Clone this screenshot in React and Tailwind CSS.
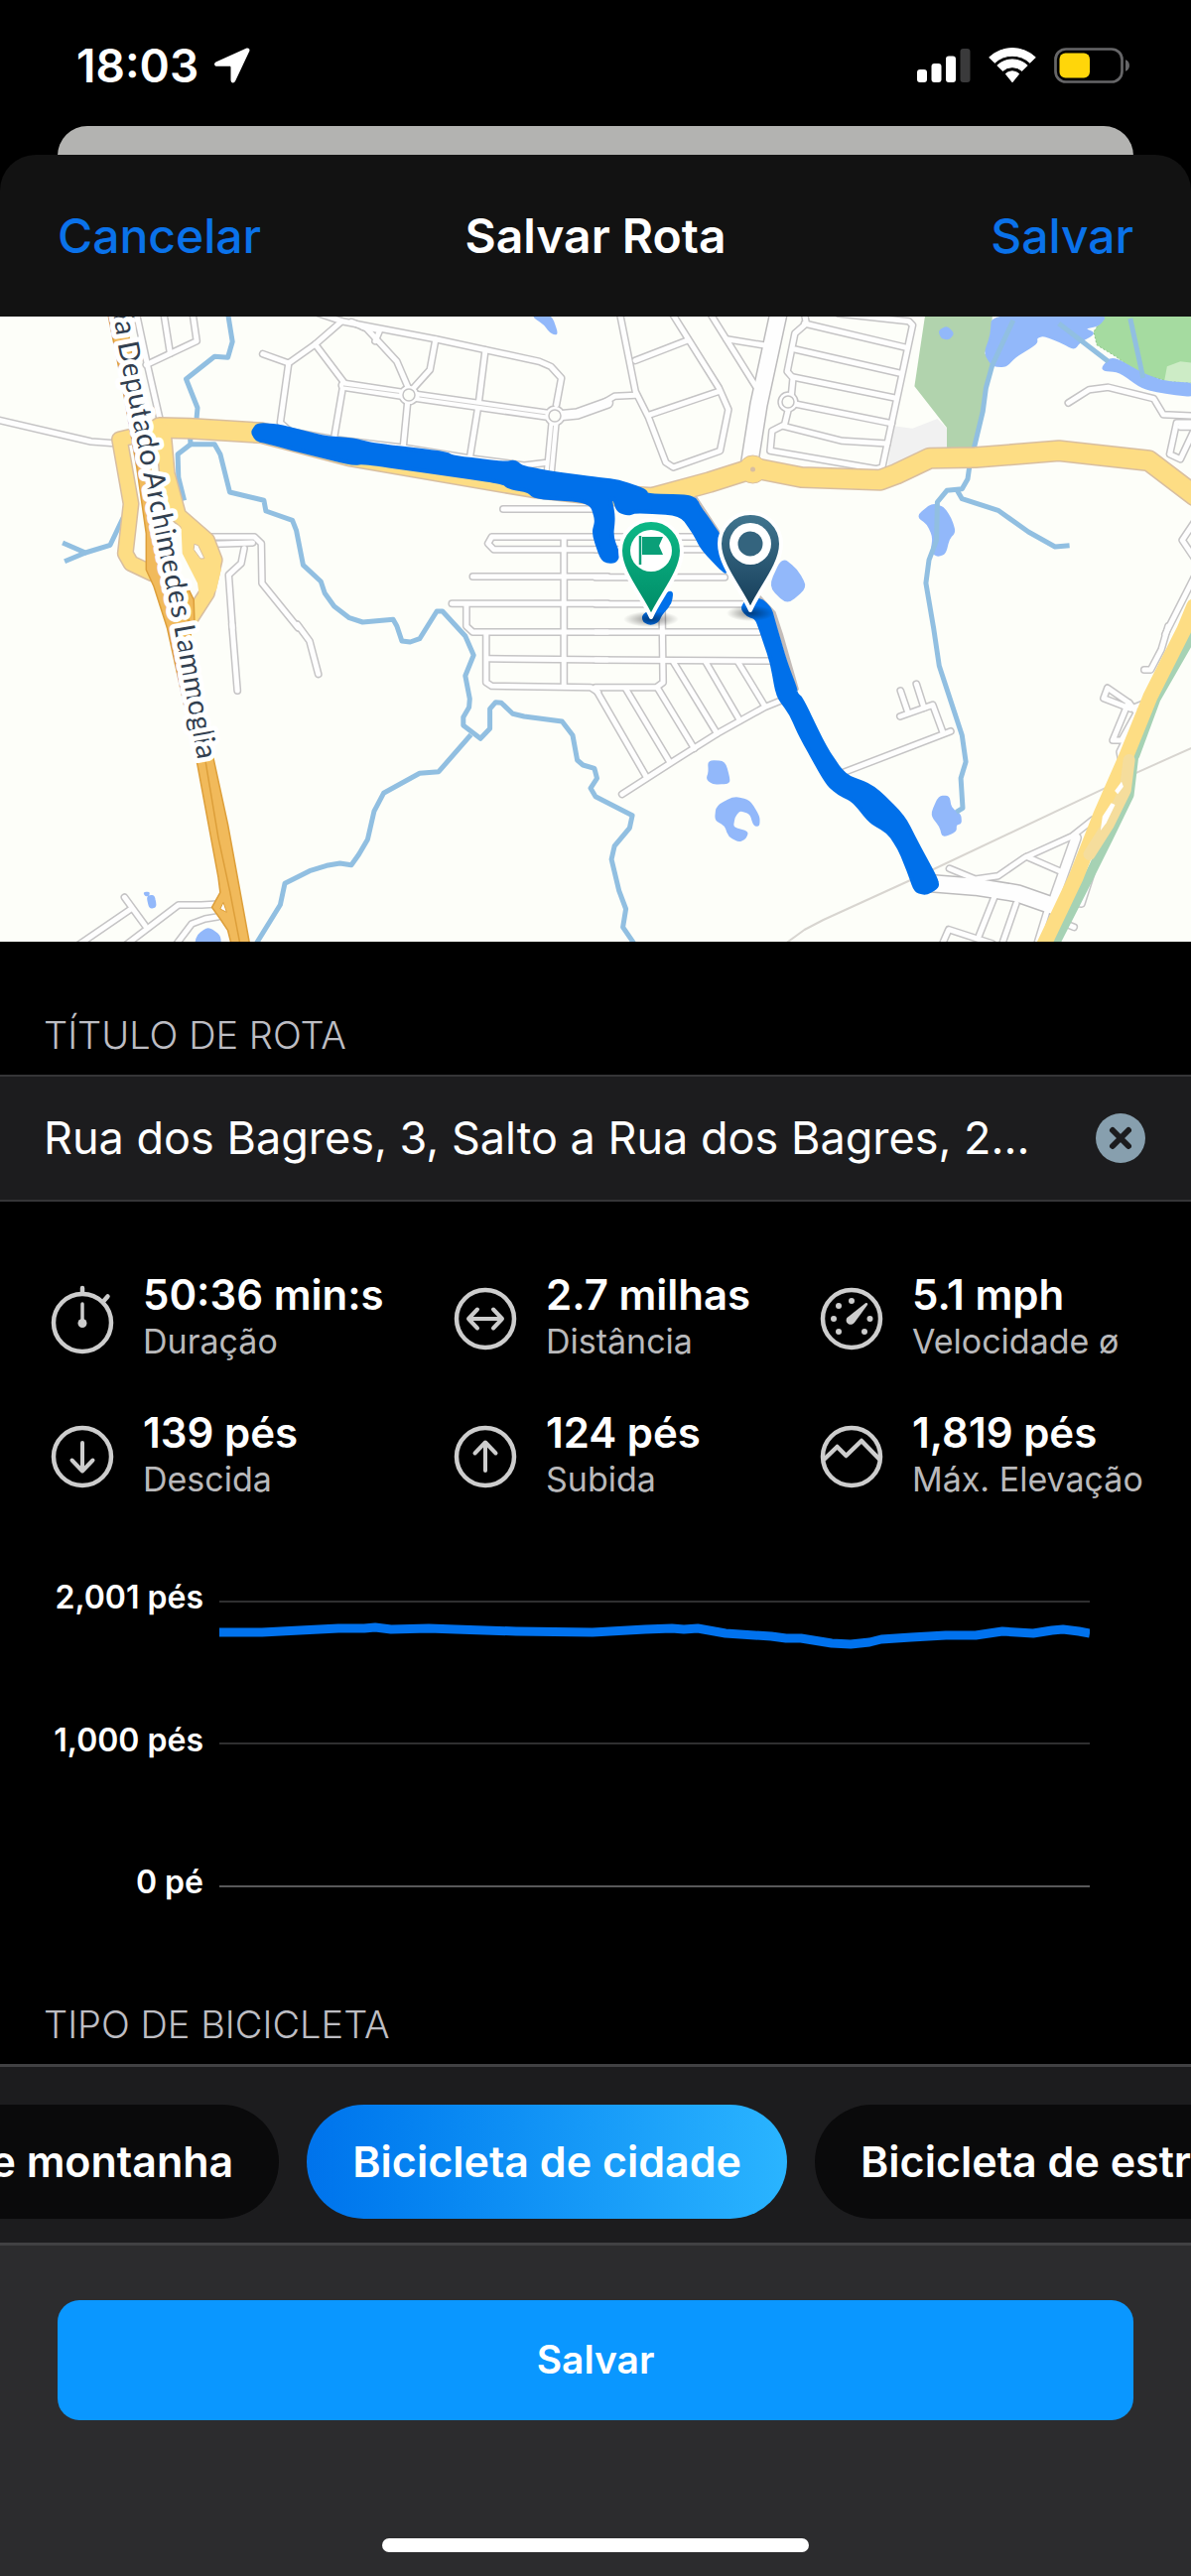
import { useId, useState } from "react";

/* ---------- status bar ---------- */

function StatusBar() {
  return (
    <div className="flex h-[127px] items-center justify-between pl-[77px] pr-[61px] pt-1">
      <div className="flex items-center gap-4">
        <time className="text-[46px] leading-none font-semibold">18:03</time>
        <svg className="h-9 w-9" viewBox="0 0 36 36" fill="#fff" aria-hidden="true">
          <path d="M32.5.6 2 14.2c-3.2 1.5-2.2 4.600.8 4.600H15.400c.8 0 1.100.4 1.100 1.100v12.700c0 3.300 3.300 4 4.700 1L35.300 3.400C36.100 1.500 34.500-.2 32.500.6Z" />
        </svg>
      </div>
      <div className="flex items-center gap-[18px]">
        <svg className="h-[34px] w-[54px]" viewBox="0 0 54 34" fill="#fff" aria-label="Sinal">
          <rect x="0" y="21" width="10" height="13" rx="3" />
          <rect x="14.500" y="15" width="10" height="19" rx="3" />
          <rect x="29" y="7.500" width="10" height="26.500" rx="3" />
          <rect x="43.500" y="0" width="10" height="34" rx="3" fill="#3a3a3b" />
        </svg>
        <svg className="h-9 w-12" viewBox="0 0 48 36" fill="#fff" stroke="#fff" strokeWidth="1" strokeLinejoin="round" aria-label="Wi-Fi">
          <path d="M.7 9.800A34 34 0 0 1 47.300 9.800L41.800 15.300A26 26 0 0 0 6.200 15.300Z" />
          <path d="M8.800 18A22 22 0 0 1 39.200 18L33.700 23.400A14.500 14.500 0 0 0 14.300 23.400Z" />
          <path d="M17.300 26.400A10 10 0 0 1 30.700 26.400L24 34.800Z" />
        </svg>
        <svg className="h-9 w-[77px]" viewBox="0 0 77 36" fill="none" aria-label="Bateria">
          <rect x="1.500" y="1.500" width="67" height="33" rx="10.500" stroke="#666668" strokeWidth="2.700" />
          <rect x="5.500" y="5.500" width="30.500" height="25" rx="6" fill="#ffd60a" />
          <path d="M72 12.200c5.300 1.500 5.300 10.200 0 11.600Z" fill="#666668" />
        </svg>
      </div>
    </div>
  );
}

/* ---------- map ---------- */

/* Map data is surveyed in four sheets; each one is projected onto the 1200 x 630 canvas. */
const SHEETS = { nw: [0, -8], ne: [600, -8], sw: [0, 312], se: [600, 312] };

function points(sheet, line) {
  const [ox, oy] = SHEETS[sheet];
  return line.split(" ").map((pair) => {
    const [x, y] = pair.split(",").map(Number);
    return [ox + x / 2.6133, oy + y / 3];
  });
}

function project(sheet, line) {
  return points(sheet, line)
    .map(([x, y]) => `${x.toFixed(1)},${y.toFixed(1)}`)
    .join(" ");
}

/* Closed outline with rounded corners: each corner becomes a short curve. */
function softOutline(sheet, line) {
  const pts = points(sheet, line);
  const at = (a, b, t) => `${(a[0] + (b[0] - a[0]) * t).toFixed(1)} ${(a[1] + (b[1] - a[1]) * t).toFixed(1)}`;
  const parts = pts.map((p, i) => {
    const prev = pts[(i + pts.length - 1) % pts.length];
    const next = pts[(i + 1) % pts.length];
    return `${i ? "L" : "M"}${at(p, prev, 0.35)}Q${p[0].toFixed(1)} ${p[1].toFixed(1)} ${at(p, next, 0.35)}`;
  });
  return `${parts.join("")}Z`;
}

const STREETS = [
  ["nw", "840,15 900,38 1150,93 1420,160 1450,175 1478,210 1465,290"],
  ["nw", "900,38 830,108 760,165 692,137"],
  ["nw", "760,165 738,345 765,372 880,395 1060,420 1240,453 1380,474 1445,465"],
  ["nw", "830,108 905,222 880,390"],
  ["nw", "925,40 965,60 1045,160 1075,240"],
  ["nw", "955,55 1000,65 988,98"],
  ["nw", "1147,93 1132,185 1085,245"],
  ["nw", "1278,125 1260,290 1238,445"],
  ["nw", "1073,285 1062,415"],
  ["nw", "360,20 388,170 420,330"],
  ["nw", "432,20 448,135"],
  ["nw", "508,20 518,98 385,170"],
  ["nw", "-10,335 240,402 310,408"],
  ["nw", "550,690 670,690 688,710 690,830 785,965"],
  ["nw", "565,712 665,708"],
  ["nw", "643,725 635,770 602,805 612,965"],
  ["sw", "783,-5 815,45 838,145"],
  ["sw", "611,-5 625,195"],
  ["nw", "1325,606 1600,606"],
  ["nw", "1600,690 1295,690 1285,710 1300,728 1600,728"],
  ["nw", "1245,810 1600,810"],
  ["nw", "1190,892 1600,892"],
  ["nw", "1228,895 1228,960 1245,978 1600,978"],
  ["nw", "1485,692 1485,1142"],
  ["sw", "1280,20 1280,170 1295,181 1555,185 1575,200"],
  ["sw", "1285,98 1600,102"],
  ["ne", "0,690 275,690"],
  ["ne", "0,728 300,728"],
  ["ne", "0,812 340,812"],
  ["ne", "0,893 400,893"],
  ["ne", "0,978 430,978"],
  ["ne", "175,893 178,1130 160,1145 0,1145"],
  ["se", "0,102 465,105"],
  ["se", "205,108 320,325"],
  ["se", "290,108 380,285"],
  ["se", "375,108 445,240"],
  ["se", "165,190 260,370"],
  ["se", "80,190 195,410"],
  ["se", "0,190 135,458"],
  ["se", "70,508 200,412 320,325 445,245 500,220"],
  ["se", "640,448 935,318"],
  ["se", "915,322 888,238 802,273"],
  ["se", "803,195 823,262"],
  ["se", "845,175 865,247"],
  ["ne", "1575,815 1500,985"],
  ["se", "1508,0 1490,70 1462,132 1445,132"],
  ["se", "1405,232 1348,187 1338,218 1410,250 1448,232 1475,195"],
  ["se", "1405,232 1425,262 1385,345 1362,345 1400,240"],
  ["se", "1410,310 1380,380 1385,410"],
  ["se", "932,733 1000,765 1060,755 1130,700 1255,635 1310,585"],
  ["se", "1135,697 1225,742"],
  ["se", "1050,820 1010,935"],
  ["se", "1108,838 1068,970"],
  ["se", "910,970 930,917 1045,960"],
  ["se", "1188,865 1160,970"],
  ["se", "1318,705 1280,840 1262,838"],
  ["se", "1238,900 1260,910"],
  ["ne", "65,20 105,250 140,330 185,465 205,480 328,430 350,305 325,240 205,20"],
  ["ne", "-40,315 0,300 50,265 105,262"],
  ["ne", "105,157 240,97"],
  ["ne", "140,322 325,250"],
  ["ne", "305,20 430,250"],
  ["ne", "345,92 450,112"],
  ["ne", "550,15 555,45 525,75 505,190 520,210 515,270 498,350 465,370 460,430 740,485 755,480 835,50 825,38 640,15"],
  ["ne", "550,45 818,118"],
  ["ne", "525,123 800,195"],
  ["ne", "520,207 788,270"],
  ["ne", "525,288 780,347"],
  ["ne", "495,355 650,400 768,408"],
  ["ne", "1245,285 1300,245 1350,238 1470,272 1495,320 1580,325"],
  ["ne", "1580,345 1530,345 1512,440 1540,455 1575,370"],
  ["ne", "1540,358 1580,358"],
  ["ne", "1580,640 1545,700 1580,760"],
  ["sw", "205,965 345,855"],
  ["sw", "328,820 382,905"],
  ["sw", "330,965 470,843 530,843 575,840"],
  ["sw", "462,965 505,900 540,885 575,878"],
];

const AVENUES = [
  ["nw", "905,232 1075,262 1460,325 1520,318 1600,285"],
  ["nw", "1460,325 1446,495"],
  ["se", "1265,640 1205,835"],
];

const BOULEVARDS = [
  ["ne", "482,15 430,290 405,470"],
  ["se", "885,778 1000,788 1110,808 1215,850"],
];

const ROUNDABOUTS = [
  [412, 79],
  [559, 100],
  [794, 86],
];

const RIVERS = [
  ["nw", "600,15 612,100 600,148 565,145 490,213 520,300 516,350"],
  ["nw", "500,380 502,410 565,410 580,440 605,555 695,580 700,612 770,640 780,670 798,775 845,825 855,860 880,900 920,935 955,948 1035,940 1045,960 1058,1005 1080,1008 1105,998 1150,915 1165,915 1225,990 1247,1048 1225,1110 1237,1180 1235,1205 1220,1235 1220,1260 1265,1300 1290,1270 1290,1210 1305,1190 1320,1192 1350,1225 1380,1233 1480,1248 1508,1290 1520,1365 1535,1380 1565,1390 1572,1420 1555,1450 1568,1475 1665,1532 1658,1570 1618,1625 1610,1665 1630,1760 1648,1815 1640,1870 1670,1920"],
  ["nw", "502,410 468,440 470,510 485,580"],
  ["nw", "325,630 290,715 225,738 165,708"],
  ["nw", "225,738 170,764"],
  ["sw", "1240,328 1155,440 1105,445 1010,505 985,560 968,645 945,690 925,722 895,717 860,724 815,740 750,778 738,842 672,965"],
  ["ne", "1100,35 1045,170 1028,240 1020,310 995,430"],
  ["ne", "985,475 980,515 965,545 925,550 900,585 898,700 878,760 870,830 890,965 905,1080 965,1290 975,1370 962,1420 967,1510 950,1522"],
  ["ne", "950,545 965,575 1060,610 1140,675 1210,720 1248,716"],
  ["ne", "1220,45 1350,160"],
  ["ne", "1408,30 1442,210"],
];

const LAKES = [
  ["nw", "1400,20 1450,20 1468,78 1450,72 1435,48"],
  ["ne", "1045,20 1345,20 1325,50 1285,60 1315,75 1275,100 1260,122 1225,100 1180,80 1160,88 1162,105 1105,145 1080,175 1045,172 1025,135 1042,80"],
  ["ne", "1360,145 1445,200 1500,222 1580,228 1580,265 1500,255 1440,240 1380,190 1330,185"],
  ["ne", "905,68 925,55 942,75 930,92 912,88"],
  ["ne", "848,628 885,592 915,600 935,635 946,675 930,695 920,740 900,748 885,735 890,690 875,650"],
  ["ne", "492,755 530,790 555,842 505,892 458,840"],
  ["se", "298,408 340,410 353,468 345,474 310,476 294,462 300,440"],
  ["se", "320,545 365,517 405,528 430,575 430,602 418,602 408,565 380,555 365,575 360,610 400,622 395,640 378,650 352,635 342,602 316,585"],
  ["se", "905,515 930,515 935,550 960,570 962,595 948,600 948,620 915,636 908,605 884,570"],
  ["sw", "388,818 405,815 410,848 395,852"],
  ["sw", "380,806 392,806 390,814 384,814"],
  ["sw", "515,965 520,935 548,912 578,935 580,965"],
];

const ROAD_EAST = [
  ["nw", "420,360 500,362 690,376 920,445 1400,540 1568,562 1718,572 1868,525 1985,482 2110,510 2318,518 2360,500 2448,452 2568,450 2788,430 3025,460 3145,565"],
];

const RAMPS = [
  ["nw", "425,365 315,395 345,590 330,740 345,770 400,800"],
  ["nw", "430,370 440,500 470,625 545,700 565,760 545,860 500,940"],
];

const ROUTE =
  "665,373 680,350 740,356 850,390 930,397 985,412 1170,437 1195,450 1330,468 1355,463 1375,480 1450,497 1568,515 1628,522 1698,550 1703,565 1808,568 1830,577 1840,600 1868,645 1898,695 1915,800 1895,780 1850,725 1830,680 1793,620 1678,612 1653,620 1628,610 1618,575 1606,572 1615,630 1610,690 1628,745 1618,765 1587,762 1563,680 1572,640 1560,595 1530,579 1410,570 1390,550 1340,540 1325,525 1195,503 960,465 930,468 880,455 810,435 700,402 677,397";

const ROUTE_SOUTH =
  "387,905 405,875 440,885 460,910 472,960 500,1070 525,1145 528,1165 542,1180 605,1330 655,1413 730,1445 810,1535 852,1630 897,1725 900,1748 870,1768 843,1760 825,1700 800,1630 770,1580 725,1552 680,1487 640,1465 610,1435 540,1290 515,1225 480,1170 465,1070 440,985 425,935 400,925";

function Lines({ data, stroke, width, cap = "round" }) {
  return (
    <g fill="none" stroke={stroke} strokeWidth={width} strokeLinecap={cap} strokeLinejoin="round">
      {data.map(([sheet, line]) => (
        <polyline key={sheet + line} points={project(sheet, line)} />
      ))}
    </g>
  );
}

function Pin({ x, y, top, bottom, id, children }) {
  return (
    <g transform={`translate(${x} ${y})`}>
      <defs>
        <linearGradient id={id} x1="0" y1="0" x2="0" y2="1">
          <stop offset="0" stopColor={top} />
          <stop offset="1" stopColor={bottom} />
        </linearGradient>
      </defs>
      <path
        d="M0 67C-9 46-31 22-31 0A31 31 0 0 1 31 0C31 22 9 46 0 67Z"
        fill={`url(#${id})`}
        stroke="#fff"
        strokeWidth="4"
        strokeLinejoin="round"
      />
      <circle r="21" fill="#fff" />
      {children}
    </g>
  );
}

function RouteMap() {
  const id = useId();
  return (
    <svg className="block w-full bg-[#fdfef9]" viewBox="0 0 1200 630" role="img" aria-label="Mapa da rota">
      <defs>
        <path id={`${id}-label`} d="M101-97 119 30 143 152 174 305 182 350 198 440 201 458" />
        <radialGradient id={`${id}-shade`}>
          <stop offset="0" stopColor="#000" stopOpacity=".45" />
          <stop offset="1" stopColor="#000" stopOpacity="0" />
        </radialGradient>
      </defs>

      <polygon points={project("ne", "868,20 1045,20 1042,80 1025,135 1045,172 1025,240 1018,310 995,425 925,420 925,360 840,235")} fill="#b1d3ad" />
      <polygon points={project("ne", "785,355 835,362 900,333 925,362 925,425 860,440 770,475")} fill="#f1f1f1" />
      <polygon points={project("ne", "1340,20 1580,20 1580,225 1500,218 1430,195 1370,145 1320,110 1312,70")} fill="#a5dba0" stroke="#8bc487" strokeWidth="1" strokeDasharray="2 2" />
      <polygon points={project("ne", "1505,175 1540,160 1580,165 1580,225 1498,218")} fill="#cdecc6" />
      {LAKES.map(([sheet, line]) => (
        <path key={line} d={softOutline(sheet, line)} fill="#92b8fa" stroke="#92b8fa" strokeWidth="2" strokeLinejoin="round" />
      ))}
      <Lines data={RIVERS} stroke="#91bfe1" width="5" cap="butt" />
      <Lines data={[["se", "500,960 550,918 600,888 835,765 1345,488"], ["se", "1415,448 1580,363"]]} stroke="#d8d5d0" width="2" />
      <Lines data={[["ne", "262,570 325,680"], ["ne", "430,870 470,920 490,990 530,1150"]]} stroke="#c4bcb8" width="4" />

      <Lines data={STREETS} stroke="#c5c4c5" width="8" />
      <Lines data={AVENUES} stroke="#c5c4c5" width="12" />
      <Lines data={BOULEVARDS} stroke="#bdbcbd" width="19" />
      <g fill="#fff" stroke="#c5c4c5" strokeWidth="1.500">
        {ROUNDABOUTS.map(([x, y]) => (
          <circle key={x} cx={x} cy={y} r="10" />
        ))}
      </g>
      <Lines data={STREETS} stroke="#fefefe" width="5" />
      <Lines data={AVENUES} stroke="#fefefe" width="9" />
      <Lines data={BOULEVARDS} stroke="#fefefe" width="16" />
      <Lines data={[["nw", "905,234 1050,256"], ["nw", "1105,267 1435,320"], ["nw", "1457,355 1446,490"]]} stroke="#cfcece" width="1" />
      <g fill="#fdfef9" stroke="#c5c4c5" strokeWidth="1.500">
        {ROUNDABOUTS.map(([x, y]) => (
          <circle key={x} cx={x} cy={y} r="6" />
        ))}
      </g>

      {/* yellow roads */}
      <Lines data={ROAD_EAST} stroke="#d8bea0" width="22" />
      <Lines data={RAMPS} stroke="#d8bea0" width="17" />
      <circle cx="758.500" cy="154" r="14" fill="#fddd84" stroke="#d8bea0" strokeWidth="1" />
      <Lines data={ROAD_EAST} stroke="#fddd84" width="19" />
      <Lines data={RAMPS} stroke="#fddd84" width="14" />
      <polygon points={project("nw", "475,610 530,670 570,720 582,790 570,850 530,910 520,830 480,740")} fill="#fddd84" />
      <polygon points={project("nw", "512,712 522,716 538,755 528,756 510,728")} fill="#fdfef9" stroke="#d8bea0" strokeWidth="1" />
      <circle cx="758.500" cy="154" r="2.500" fill="#d8bea0" />

      <Lines data={[["ne", "1590,900 1560,1010 1475,1180 1420,1350"], ["se", "1418,385 1405,510 1350,640 1285,790 1205,970"]]} stroke="#a6d2b4" width="10" />
      <Lines data={[["ne", "1575,900 1550,970 1460,1175 1395,1360 1330,1530 1265,1720 1180,1925"]]} stroke="#fddd84" width="15" />
      <Lines data={[["se", "1405,405 1395,495 1350,600 1300,690"]]} stroke="#f5dd9c" width="12" />
      <polygon points={project("se", "1385,470 1390,485 1375,508 1367,498")} fill="#fff" />
      <polygon points={project("se", "1358,535 1368,540 1345,595 1330,618 1335,575")} fill="#fff" />

      {/* trunk highway */}
      <g fill="#f1ba5b" stroke="#dd9f3a" strokeWidth="1.500" strokeLinejoin="round">
        <polygon points={project("nw", "285,20 320,220 360,480 385,680 385,790 405,840 440,965 520,1380 575,1720 580,1765 558,1810 580,1845 600,1880 610,1925 658,1925 600,1560 562,1360 515,1130 500,960 440,780 330,20")} />
        <polygon points={project("nw", "495,845 510,880 512,945 500,950 485,900")} />
      </g>
      <polyline points={project("sw", "540,400 575,640 605,800 632,960")} fill="none" stroke="#dd9f3a" strokeWidth="1.500" />
      <polygon points={project("sw", "588,835 597,865 580,855")} fill="#fff" stroke="#dd9f3a" strokeWidth="1" />
      <text
        className="font-['Lato',sans-serif] text-[29px]"
        fill="#323f50"
        stroke="#fff"
        strokeWidth="10"
        strokeLinejoin="round"
        paintOrder="stroke"
        textAnchor="end"
      >
        <textPath href={`#${id}-label`} startOffset="98%">
          Rodovia Deputado Archimedes Lammoglia
        </textPath>
      </text>

      {/* recorded route */}
      <g fill="#0070ea" stroke="#0070ea" strokeWidth="4" strokeLinejoin="round">
        <path d={softOutline("nw", ROUTE)} />
        <path d={softOutline("ne", ROUTE_SOUTH)} />
        <path d={softOutline("ne", "127,930 145,915 200,852 196,890 170,925 162,945 145,951 130,945")} />
      </g>
      <ellipse cx="656" cy="305" rx="28" ry="8" fill={`url(#${id}-shade)`} />
      <ellipse cx="756" cy="299" rx="24" ry="8" fill={`url(#${id}-shade)`} />

      <Pin x={656} y={236} top="#0cb987" bottom="#008a66" id={`${id}-start`}>
        <path d="M-11-15V14" stroke="#0a9f78" strokeWidth="2.500" />
        <path d="M-9-14H12L8-5 12 4H-9Z" fill="#0a9f78" />
      </Pin>
      <Pin x={756} y={229} top="#417690" bottom="#153c58" id={`${id}-end`}>
        <circle r="12.500" fill="#34647e" />
      </Pin>
    </svg>
  );
}

/* ---------- stats ---------- */

function StatIcon({ children }) {
  return (
    <svg
      className="h-16 w-16 shrink-0 overflow-visible"
      viewBox="0 0 64 64"
      fill="none"
      stroke="#cdcdcd"
      strokeWidth="4.500"
      strokeLinecap="round"
      strokeLinejoin="round"
      aria-hidden="true"
    >
      {children}
    </svg>
  );
}

const STATS = [
  {
    value: "50:36 min:s",
    label: "Duração",
    icon: (
      <StatIcon>
        <circle cx="32" cy="37" r="29" />
        <path d="M32 7V2M54 14.500l3.500-4" />
        <path d="M32 18v20" strokeWidth="3.500" />
        <circle cx="32" cy="37.500" r="4.500" fill="#cdcdcd" stroke="none" />
      </StatIcon>
    ),
  },
  {
    value: "2.7 milhas",
    label: "Distância",
    icon: (
      <StatIcon>
        <circle cx="32" cy="33" r="29" />
        <path d="M15 33H49M24 23.500 15 33l9 9.500M40 23.500 49 33l-9 9.500" strokeWidth="4" />
      </StatIcon>
    ),
  },
  {
    value: "5.1 mph",
    label: "Velocidade ø",
    icon: (
      <StatIcon>
        <circle cx="32" cy="33" r="29" />
        <g fill="#cdcdcd" stroke="none">
          <circle cx="32" cy="15" r="3" />
          <circle cx="19" cy="20" r="3" />
          <circle cx="14" cy="33" r="3" />
          <circle cx="19" cy="46" r="3" />
          <circle cx="45" cy="46" r="3" />
          <circle cx="50.500" cy="33" r="3" />
          <path d="M46 17.200c1.400-.8 2.800.3 2 1.700L35.200 36.500c-3.800 5.200-11 .8-7.800-4.500Z" />
        </g>
      </StatIcon>
    ),
  },
  {
    value: "139 pés",
    label: "Descida",
    icon: (
      <StatIcon>
        <circle cx="32" cy="33" r="29" />
        <path d="M32 19V47M21.500 36.500 32 47.500 42.500 36.500" strokeWidth="4" />
      </StatIcon>
    ),
  },
  {
    value: "124 pés",
    label: "Subida",
    icon: (
      <StatIcon>
        <circle cx="32" cy="33" r="29" />
        <path d="M32 47V19M21.500 29.500 32 18.500 42.500 29.500" strokeWidth="4" />
      </StatIcon>
    ),
  },
  {
    value: "1,819 pés",
    label: "Máx. Elevação",
    icon: (
      <StatIcon>
        <circle cx="32" cy="33" r="29" />
        <path d="M4 36 17.500 23 26.500 32 42 17 60.500 36" strokeLinecap="butt" />
      </StatIcon>
    ),
  },
];

function Stats() {
  return (
    <dl className="grid grid-cols-[406fr_369fr_374fr] gap-y-[45px] pl-[51px] pt-[70px]">
      {STATS.map(({ value, label, icon }) => (
        <div key={label} className="flex items-center gap-[29px] whitespace-nowrap">
          {icon}
          <div className="flex flex-col-reverse">
            <dt className="text-[34px] leading-[46px] text-[#b9b9bb]">{label}</dt>
            <dd className="text-[42px] leading-[48px] font-semibold">{value}</dd>
          </div>
        </div>
      ))}
    </dl>
  );
}

/* ---------- elevation chart ---------- */

function ElevationChart() {
  return (
    <figure className="flex pt-[72px] pr-[102px] pb-[25px]" aria-label="Perfil de elevação">
      <div className="flex h-[335px] w-[221px] flex-col justify-between pr-4 text-right text-[32px] leading-[48px] font-semibold">
        <span>2,001 pés</span>
        <span>1,000 pés</span>
        <span>0 pé</span>
      </div>
      <svg className="h-[335px] min-w-0 flex-1" viewBox="0 0 877 335" preserveAspectRatio="none" aria-hidden="true">
        <path d="M0 28H877M0 171H877" stroke="#2f2f30" strokeWidth="2" />
        <path d="M0 315H877" stroke="#58585a" strokeWidth="2" />
        <polyline
          points="0,59 43,59 81,57 120,55 146,55 157,54 173,56 211,55 238,56 299,58 376,59 429,56 456,55 468,56 482,55 510,60 556,63 571,65 586,65 617,70 636,71 655,69 667,66 682,65 697,64 732,62 762,62 789,58 820,60 839,57 850,56 866,58 877,60"
          fill="none"
          stroke="#0072ee"
          strokeWidth="9"
          strokeLinejoin="round"
        />
      </svg>
    </figure>
  );
}

/* ---------- page ---------- */

const BIKES = ["Bicicleta de montanha", "Bicicleta de cidade", "Bicicleta de estrada"];

export default function App() {
  const [title, setTitle] = useState("Rua dos Bagres, 3, Salto a Rua dos Bagres, 2...");
  const [bike, setBike] = useState(BIKES[1]);

  return (
    <div className="flex min-h-screen flex-col overflow-x-hidden bg-black font-['Inter',sans-serif] text-white">
      <StatusBar />
      <div className="-mb-10 h-[69px] mx-[58px] rounded-t-[30px] bg-[#b3b3b1]" />

      <header className="relative grid h-[163px] grid-cols-[1fr_auto_1fr] items-center rounded-t-[36px] bg-[#121212] px-[58px] text-[48px]">
        <button type="button" className="justify-self-start font-medium text-[#0a72ea]">
          Cancelar
        </button>
        <h1 className="font-semibold">Salvar Rota</h1>
        <button type="button" className="justify-self-end font-medium text-[#0a72ea]">
          Salvar
        </button>
      </header>

      <RouteMap />

      <label htmlFor="route-title" className="px-11 pt-[70px] pb-4 text-[38px] leading-[48px] font-light text-[#bdbdc3]">
        TÍTULO DE ROTA
      </label>
      <div className="flex h-32 items-center border-y-2 border-[#353537] bg-[#1c1c1e] pl-11 pr-[46px]">
        <input
          id="route-title"
          type="text"
          value={title}
          onChange={(e) => setTitle(e.target.value)}
          className="min-w-0 flex-1 bg-transparent text-[45px] outline-none"
        />
        <button type="button" aria-label="Limpar" onClick={() => setTitle("")} className="ml-7 h-[50px] w-[50px] rounded-full bg-[#879fae]">
          <svg viewBox="0 0 50 50" stroke="#1c1c1e" strokeWidth="6" strokeLinecap="round" aria-hidden="true">
            <path d="M17 17 33 33M33 17 17 33" />
          </svg>
        </button>
      </div>

      <Stats />
      <ElevationChart />

      <h2 className="px-11 pt-[70px] pb-4 text-[38px] leading-[48px] font-light text-[#bdbdc3]">TIPO DE BICICLETA</h2>
      <div className="flex gap-7 overflow-hidden border-y-[3px] border-[#414143] bg-[#1c1c1e] pt-[38px] pb-6">
        {BIKES.map((name) => (
          <button
            key={name}
            type="button"
            aria-pressed={bike === name}
            onClick={() => setBike(name)}
            className="h-[115px] shrink-0 rounded-full bg-[#0a0a0b] px-[46px] text-[43px] font-semibold whitespace-nowrap first:-ml-[271px] aria-pressed:bg-linear-to-r aria-pressed:from-[#0073ec] aria-pressed:to-[#2ab4ff]"
          >
            {name}
          </button>
        ))}
      </div>

      <footer className="flex flex-1 flex-col justify-between bg-[#2c2c2e] px-[58px] pt-[55px] pb-6">
        <button type="button" className="h-[121px] rounded-[22px] bg-[#0a97ff] text-[39px] font-semibold">
          Salvar
        </button>
        <div className="mx-auto h-3.5 w-[430px] rounded-full bg-white" />
      </footer>
    </div>
  );
}
